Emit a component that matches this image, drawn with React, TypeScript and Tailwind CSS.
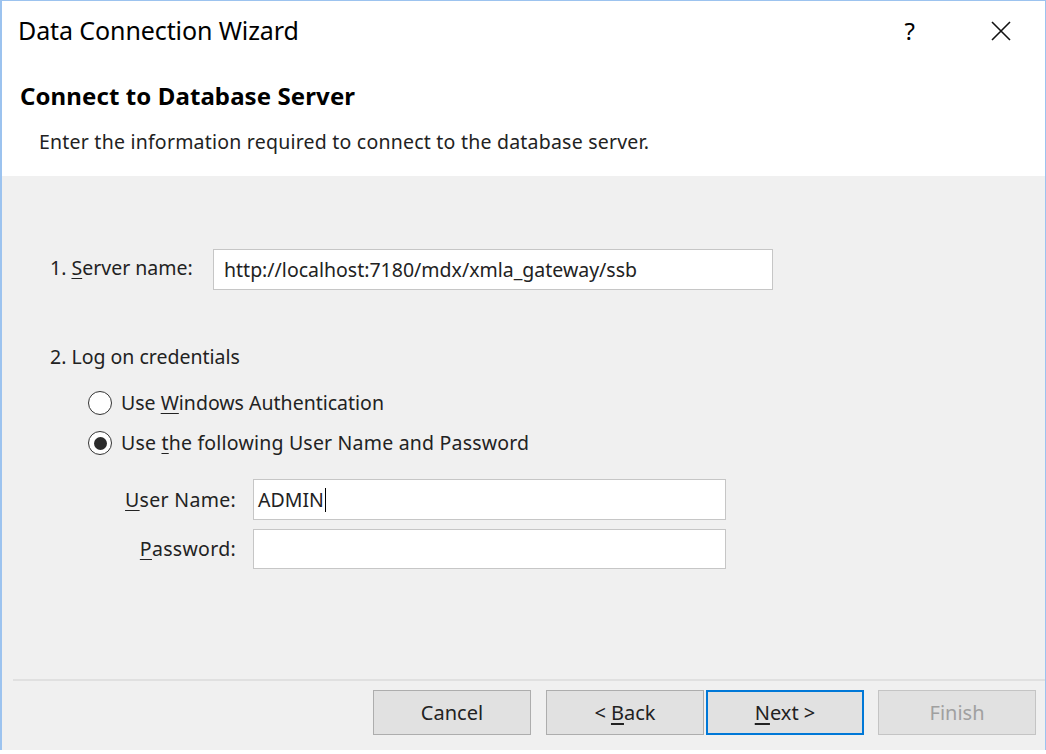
import { FC } from "react";

const font = { fontFamily: '"Noto Sans", "Open Sans", sans-serif' };

const Radio: FC<{ checked?: boolean }> = ({ checked }) => (
  <span className="flex h-[24px] w-[24px] shrink-0 items-center justify-center rounded-full border-[1.5px] border-[#333333] bg-white">
    {checked && <span className="h-[13px] w-[13px] rounded-full bg-[#2b2b2b]" />}
  </span>
);

const buttonBase =
  "flex h-[45px] w-[158px] items-center justify-center border bg-[#e1e1e1] text-[20px]";

const App: FC = () => {
  return (
    <div className="h-[754px] w-[1046px] overflow-hidden bg-white text-[#1a1a1a]" style={font}>
      <div className="flex h-[750px] w-[1046px] flex-col border-l-2 border-r border-t border-[#9cc3ef] bg-[#f0f0f0]">
        {/* title bar */}
        <div className="flex h-[59px] items-center bg-white pl-[16px]">
          <span className="text-[25px] tracking-[-0.1px] text-black">Data Connection Wizard</span>
          <span className="ml-auto mr-[76px] text-[24px] text-black">?</span>
          <svg width="20" height="20" viewBox="0 0 20 20" className="mr-[34px]">
            <path d="M1 1 L19 19 M19 1 L1 19" stroke="#111" strokeWidth="1.6" />
          </svg>
        </div>

        {/* header */}
        <div className="h-[116px] bg-white">
          <h1 className="pl-[18px] pt-[19px] text-[24px] font-bold leading-[34px] tracking-[0.1px] text-black">
            Connect to Database Server
          </h1>
          <p className="pl-[37px] pt-[15px] text-[19.5px] leading-[28px] tracking-[0.22px] text-[#222]">
            Enter the information required to connect to the database server.
          </p>
        </div>

        {/* form */}
        <div className="flex flex-1 flex-col pl-[48px] pt-[73px] text-[19.5px] text-[#222]">
          <div className="flex items-center">
            <span className="w-[163px] pb-[4px]">
              1. <u className="underline-offset-[3px]">S</u>erver name:
            </span>
            <div className="flex h-[41px] w-[560px] items-center border border-[#c6c6c6] bg-white pl-[10px]">
              http://localhost:7180/mdx/xmla_gateway/ssb
            </div>
          </div>

          <div className="mt-[54px] leading-[26px]">2. Log on credentials</div>

          <div className="ml-[38px] mt-[13px] flex flex-col">
            <div className="flex h-[40px] items-center gap-[9px]">
              <Radio />
              <span>
                Use <u className="underline-offset-[3px]">W</u>indows Authentication
              </span>
            </div>
            <div className="flex h-[40px] items-center gap-[9px]">
              <Radio checked />
              <span className="tracking-[0.2px]">
                Use <u className="underline-offset-[3px]">t</u>he following User Name and Password
              </span>
            </div>
          </div>

          <div className="ml-[37px] mt-[16px] flex flex-col gap-[9px]">
            <div className="flex items-center">
              <span className="w-[166px] pr-[17px] text-right tracking-[0.3px]">
                <u className="underline-offset-[3px]">U</u>ser Name:
              </span>
              <div className="flex h-[41px] w-[473px] items-center border border-[#c6c6c6] bg-white pl-[4px]">
                ADMIN
                <span className="ml-[1px] h-[24px] w-[1.5px] bg-black" />
              </div>
            </div>
            <div className="flex items-center">
              <span className="w-[166px] pr-[17px] text-right tracking-[0.3px]">
                <u className="underline-offset-[3px]">P</u>assword:
              </span>
              <div className="h-[40px] w-[473px] border border-[#c6c6c6] bg-white" />
            </div>
          </div>
        </div>

        {/* footer */}
        <div className="ml-[11px] h-[2px] bg-[#e0e0e0]" />
        <div className="flex h-[69px] items-start justify-end pr-[9px] pt-[9px] text-[#222]">
          <button className={`${buttonBase} border-[#adadad]`}>Cancel</button>
          <button className={`${buttonBase} ml-[15px] border-[#adadad]`}>
            &lt; <u className="ml-[5px] underline-offset-[3px]">B</u>ack
          </button>
          <button className={`${buttonBase} ml-[2px] border-2 border-[#0078d7]`}>
            <u className="underline-offset-[3px]">N</u>ext &gt;
          </button>
          <button className={`${buttonBase} ml-[14px] border-[#c4c4c4] text-[#a0a0a0]`}>Finish</button>
        </div>
      </div>
    </div>
  );
};

export default App;
